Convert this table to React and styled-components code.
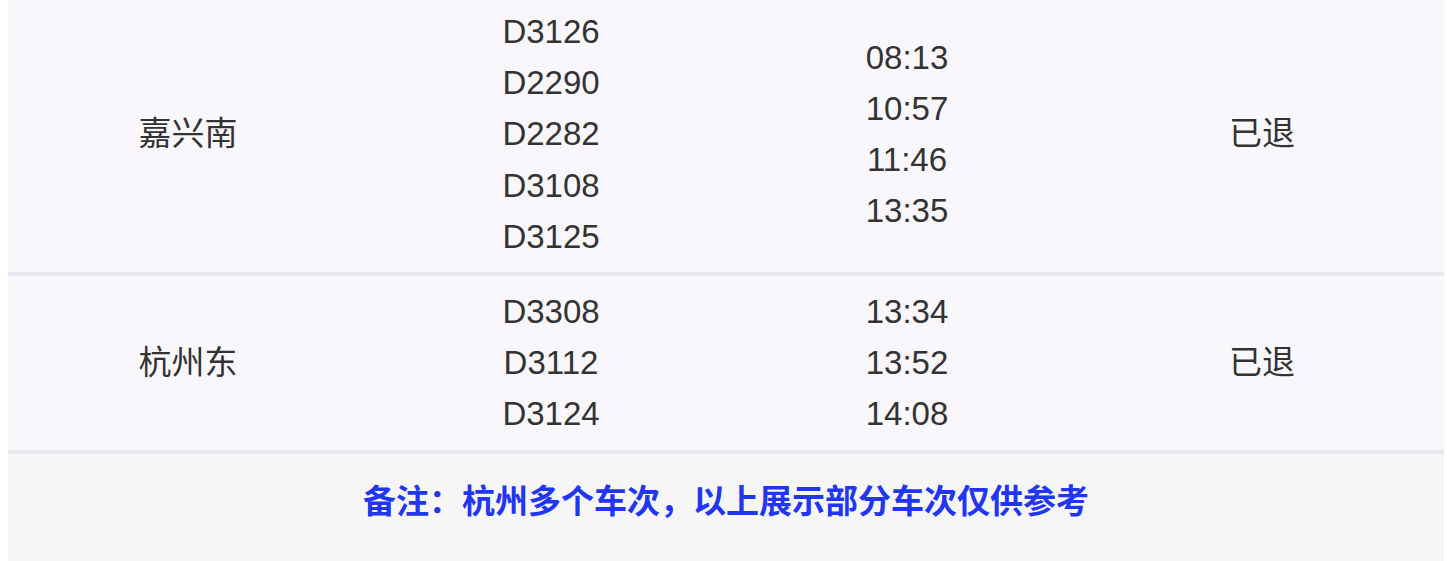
import React from "react";
import styled, { createGlobalStyle } from "styled-components";

const GlobalStyle = createGlobalStyle`
  body {
    margin: 0 3px 0 8px;
    background: #ffffff;
    font-family: "Liberation Sans", "Noto Sans CJK SC", sans-serif;
  }
`;

const Table = styled.div`
  margin-top: -4px;
  color: #333333;
  font-size: 33px;
  line-height: 51.2px;
`;

const Row = styled.div`
  display: grid;
  grid-template-columns: 360fr 366fr 346fr 364fr;
  align-items: center;
  padding: 10px 0;
  background-color: #f9f7fb;
  border-bottom: 4px solid #ebe7ef;
`;

const Cell = styled.div`
  text-align: center;
`;

const Line = styled.div`
  height: 51.2px;
`;

const Note = styled.div`
  background-color: #f6f6f7;
  padding: 18px 0 40px;
  text-align: center;
  color: #2236f2;
  font-size: 33px;
  font-weight: 700;
  line-height: 54px;
  font-family: "Noto Sans CJK SC", "Liberation Sans", sans-serif;
`;

const rows = [
  {
    station: "嘉兴南",
    trains: ["D3126", "D2290", "D2282", "D3108", "D3125"],
    times: ["08:13", "10:57", "11:46", "13:35"],
    status: "已退",
  },
  {
    station: "杭州东",
    trains: ["D3308", "D3112", "D3124"],
    times: ["13:34", "13:52", "14:08"],
    status: "已退",
  },
];

const App = () => (
  <>
    <GlobalStyle />
    <Table>
      {rows.map(({ station, trains, times, status }) => (
        <Row key={station}>
          <Cell>{station}</Cell>
          <Cell>
            {trains.map((t) => (
              <Line key={t}>{t}</Line>
            ))}
          </Cell>
          <Cell>
            {times.map((t) => (
              <Line key={t}>{t}</Line>
            ))}
          </Cell>
          <Cell>{status}</Cell>
        </Row>
      ))}
      <Note>备注：杭州多个车次，以上展示部分车次仅供参考</Note>
    </Table>
  </>
);

export default App;
